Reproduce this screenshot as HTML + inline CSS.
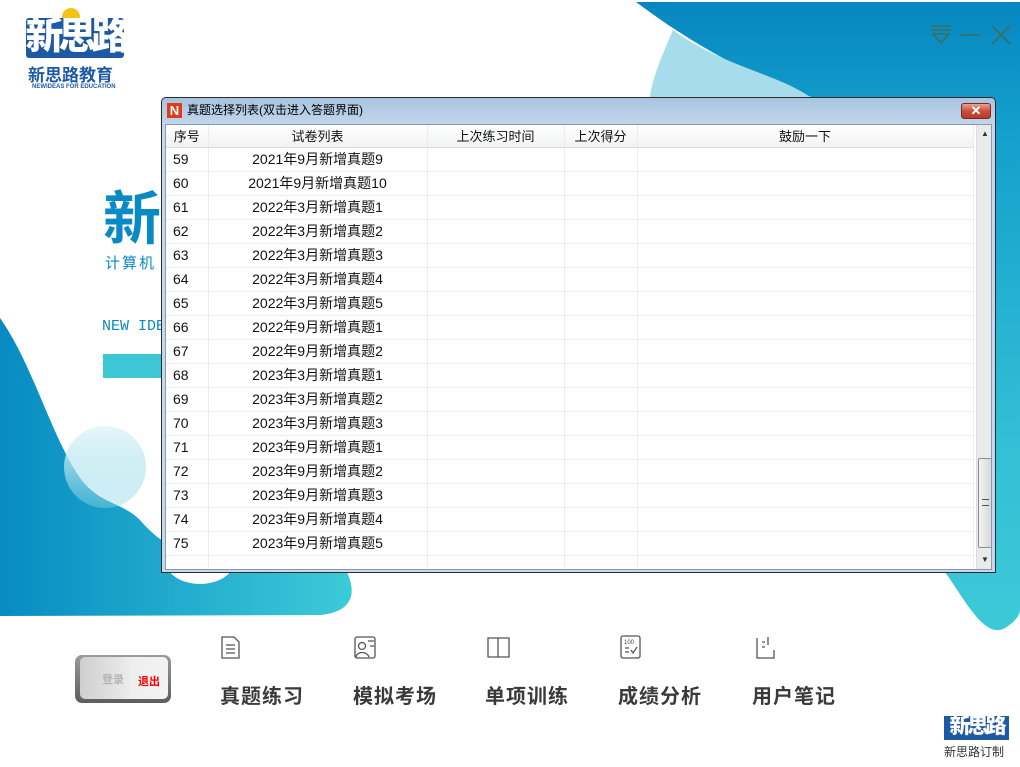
<!DOCTYPE html>
<html><head><meta charset="utf-8"><style>
*{margin:0;padding:0;box-sizing:border-box}
body{width:1020px;height:767px;overflow:hidden;background:#fff;position:relative;font-family:"Liberation Sans","Noto Sans CJK SC",sans-serif}
.abs{position:absolute}
#dlg{left:161px;top:97px;width:835px;height:476px;border:1px solid #2b2b2b;border-radius:5px 5px 0 0;background:linear-gradient(#a9c3df,#c5d9ee 30px,#c5d9ee);}
#title{left:0;top:0;width:100%;height:24px;font-size:12px;color:#000;line-height:25px;padding-left:25px}
#nicon{left:5px;top:5px;width:15px;height:15px;background:#e23a1c;color:#fff;font-weight:bold;font-size:13px;line-height:15px;text-align:center;font-family:"Liberation Sans",sans-serif}
#xbtn{left:799px;top:5px;width:30px;height:16px;border:1px solid #7a2a20;border-radius:3px;background:linear-gradient(#e9a292,#c9503a 50%,#b73a26);color:#fff;font-size:13px;font-weight:bold;line-height:14px;text-align:center}
#body{left:3px;top:26px;width:827px;height:446px;background:#fff;border:1px solid #8a98aa;overflow:hidden}
table{border-collapse:collapse;font-size:14px;color:#111;table-layout:fixed}
td{height:24px;border-right:1px solid #ececec;border-bottom:1px solid #ececec;white-space:nowrap;padding:0}
tr.h td{height:22px;font-size:13px;background:linear-gradient(#fff,#f1f2f4);border-bottom:1px solid #dcdcdc;text-align:center}
td.c{text-align:center}
td.n{padding-left:7px}
#sb{left:810px;top:0;width:17px;height:444px;background:#eaeaea;border-left:1px solid #ddd}
#thumb{left:1px;top:333px;width:15px;height:90px;border:1px solid #8f8f8f;border-radius:2px;background:linear-gradient(90deg,#f3f3f3,#d6d6d6)}
.menu{font-size:20px;font-weight:bold;color:#3a3a3a;letter-spacing:1px}
</style></head><body>
<svg class="abs" style="left:0;top:0" width="1020" height="767">
<defs>
<linearGradient id="g1" x1="0" x2="1"><stop offset="0" stop-color="#078bc2"/><stop offset="1" stop-color="#3ccbd8"/></linearGradient>
<linearGradient id="g2" gradientUnits="userSpaceOnUse" x1="0" y1="0" x2="0" y2="630"><stop offset="0" stop-color="#0686c0"/><stop offset=".2" stop-color="#139fcb"/><stop offset=".7" stop-color="#33bfd6"/><stop offset="1" stop-color="#3cc9d7"/></linearGradient>
<linearGradient id="gc" x1="0" y1="0" x2="0" y2="1"><stop offset="0" stop-color="#e6f7fa"/><stop offset="1" stop-color="#8fd6e6" stop-opacity=".4"/></linearGradient>
</defs>
<path d="M0,318 C30,360 50,430 75,470 C95,505 120,500 140,520 C170,555 200,560 250,560 L340,560 C360,590 355,612 320,615 L0,616 Z" fill="url(#g1)"/>
<ellipse cx="200" cy="560" rx="35" ry="24" fill="#fff"/>
<circle cx="105" cy="467" r="41" fill="url(#gc)"/>
<path d="M636,2 C700,50 760,80 820,100 L820,560 L945,572 C965,600 985,640 1005,628 C1015,622 1020,615 1020,610 L1020,2 Z" fill="url(#g2)"/>
<path d="M673,30 C660,60 652,80 650,97 L810,97 C780,75 720,65 673,30 Z" fill="#a6dcec"/>
<g stroke="#3f6e5c" stroke-width="1.6" fill="none">
<line x1="931" y1="26" x2="951" y2="26"/><line x1="931" y1="30" x2="951" y2="30"/><path d="M933,34 L949,34 L941,43 Z"/>
<line x1="961" y1="35" x2="980" y2="35"/>
<line x1="992" y1="26" x2="1010" y2="44"/><line x1="1010" y1="26" x2="992" y2="44"/>
</g>
<g stroke="#555" stroke-width="1.3" fill="none">
<path d="M222,637 L234,637 L239,642 L239,658 L222,658 Z M226,645 L235,645 M226,649 L235,649 M226,653 L235,653"/>
<rect x="355" y="637" width="20" height="21" rx="2"/><circle cx="362" cy="646" r="3.5"/><path d="M356,657 C357,651 367,651 369,657 M368,641 L374,641 M370,646 L374,646"/>
<path d="M488,638 L498,638 L498,657 L488,657 Z M498,638 L509,638 L509,657 L498,657"/>
<rect x="621" y="636" width="19" height="22" rx="2"/><path d="M625,648 L629,648 M625,652 L629,652 M631,650 L633,653 L637,647"/>
<path d="M757,638 L757,658 L774,658 L774,650 M762,642 L765,642 M762,647 L765,647 M768,637 L768,645"/>
</g>
<text x="624" y="644" font-size="6" fill="#444" font-family="Liberation Sans">100</text>
</svg>
<div class="abs" style="left:26px;top:18px;width:98px;height:40px;background:#1d5aa3;border-radius:3px"></div>
<div class="abs" style="left:24px;top:16px;width:102px;font-size:38px;font-weight:900;color:#fff;letter-spacing:-5px;line-height:42px;text-align:center">新思路</div>
<div class="abs" style="left:62px;top:8px;width:18px;height:10px;background:#f4c21b;border-radius:9px 9px 0 0"></div>
<div class="abs" style="left:28px;top:61px;font-size:17px;font-weight:bold;color:#1d5aa3">新思路教育</div>
<div class="abs" style="left:32px;top:84px;font-size:6px;color:#1d5aa3;font-weight:bold">NEWIDEAS FOR EDUCATION</div>
<div class="abs" style="left:103px;top:172px;font-size:58px;font-weight:bold;color:#0a8ac4">新</div>
<div class="abs" style="left:105px;top:252px;font-size:15px;color:#0a8ac4;letter-spacing:2px">计算机</div>
<div class="abs" style="left:102px;top:318px;font-size:15px;color:#0a8ac4;font-family:'Liberation Mono',monospace">NEW IDE</div>
<div class="abs" style="left:103px;top:354px;width:60px;height:24px;background:#3cc6d6"></div>
<div class="abs" id="dlg">
<div class="abs" id="nicon">N</div>
<div class="abs" id="title">真题选择列表(双击进入答题界面)</div>
<div class="abs" id="xbtn">✕</div>
<div class="abs" id="body">
<table>
<colgroup><col style="width:42px"><col style="width:219px"><col style="width:137px"><col style="width:73px"><col style="width:336px"></colgroup>
<tr class="h"><td>序号</td><td>试卷列表</td><td>上次练习时间</td><td>上次得分</td><td>鼓励一下</td></tr>
<tr><td class="n">59</td><td class="c">2021年9月新增真题9</td><td></td><td></td><td></td></tr>
<tr><td class="n">60</td><td class="c">2021年9月新增真题10</td><td></td><td></td><td></td></tr>
<tr><td class="n">61</td><td class="c">2022年3月新增真题1</td><td></td><td></td><td></td></tr>
<tr><td class="n">62</td><td class="c">2022年3月新增真题2</td><td></td><td></td><td></td></tr>
<tr><td class="n">63</td><td class="c">2022年3月新增真题3</td><td></td><td></td><td></td></tr>
<tr><td class="n">64</td><td class="c">2022年3月新增真题4</td><td></td><td></td><td></td></tr>
<tr><td class="n">65</td><td class="c">2022年3月新增真题5</td><td></td><td></td><td></td></tr>
<tr><td class="n">66</td><td class="c">2022年9月新增真题1</td><td></td><td></td><td></td></tr>
<tr><td class="n">67</td><td class="c">2022年9月新增真题2</td><td></td><td></td><td></td></tr>
<tr><td class="n">68</td><td class="c">2023年3月新增真题1</td><td></td><td></td><td></td></tr>
<tr><td class="n">69</td><td class="c">2023年3月新增真题2</td><td></td><td></td><td></td></tr>
<tr><td class="n">70</td><td class="c">2023年3月新增真题3</td><td></td><td></td><td></td></tr>
<tr><td class="n">71</td><td class="c">2023年9月新增真题1</td><td></td><td></td><td></td></tr>
<tr><td class="n">72</td><td class="c">2023年9月新增真题2</td><td></td><td></td><td></td></tr>
<tr><td class="n">73</td><td class="c">2023年9月新增真题3</td><td></td><td></td><td></td></tr>
<tr><td class="n">74</td><td class="c">2023年9月新增真题4</td><td></td><td></td><td></td></tr>
<tr><td class="n">75</td><td class="c">2023年9月新增真题5</td><td></td><td></td><td></td></tr>
<tr><td></td><td></td><td></td><td></td><td></td></tr>
</table>
<div class="abs" id="sb"><div class="abs" style="left:4px;top:4px;font-size:8px;color:#333">▲</div><div class="abs" id="thumb"><div style="margin:40px auto 0;width:7px;height:7px;border-top:1px solid #555;border-bottom:1px solid #555"></div></div><div class="abs" style="left:4px;top:430px;font-size:8px;color:#333">▼</div></div>
</div>
</div>
<div class="abs" style="left:75px;top:655px;width:96px;height:48px;border-radius:7px;background:linear-gradient(#9a9a9a,#5e5e5e);"></div>
<div class="abs" style="left:80px;top:657px;width:88px;height:42px;border-radius:5px;background:linear-gradient(90deg,#cfcfcf,#e3e3e3 40%,#eeeeee 60%,#f3f3f3)"></div>
<div class="abs" style="left:102px;top:671px;font-size:11px;font-weight:bold;color:#b5b5b5">登录</div>
<div class="abs" style="left:138px;top:673px;font-size:11px;font-weight:bold;color:#f00">退出</div>
<div class="abs menu" style="left:220px;top:680px">真题练习</div>
<div class="abs menu" style="left:353px;top:680px">模拟考场</div>
<div class="abs menu" style="left:485px;top:680px">单项训练</div>
<div class="abs menu" style="left:618px;top:680px">成绩分析</div>
<div class="abs menu" style="left:752px;top:680px">用户笔记</div>
<div class="abs" style="left:944px;top:716px;width:65px;height:24px;background:#1d5aa3"></div>
<div class="abs" style="left:944px;top:714px;width:65px;font-size:21px;font-weight:900;color:#fff;letter-spacing:-3px;text-align:center;line-height:26px">新思路</div>
<div class="abs" style="left:944px;top:743px;font-size:12px;color:#333">新思路订制</div>
</body></html>
